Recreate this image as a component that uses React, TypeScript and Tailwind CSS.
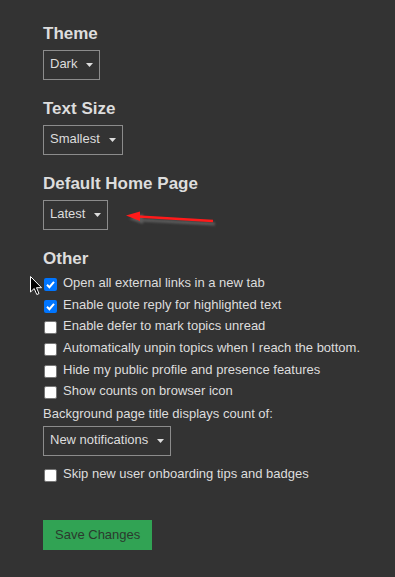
import React from "react";

const font = { fontFamily: '"Liberation Sans", Arial, sans-serif' };

function Caret() {
  return (
    <svg width="7" height="4" viewBox="0 0 7 4" className="shrink-0">
      <path d="M0 0 L7 0 L3.5 4 Z" fill="#dddddd" />
    </svg>
  );
}

function Select({ label }: { label: string }) {
  return (
    <div className="inline-flex h-[30px] items-center gap-[9px] border border-[#8c8c8c] pl-[6px] pr-[6px] pb-[2px] text-[13px] leading-[16px] text-[#dddddd]">
      <span>{label}</span>
      <span className="mt-[2px] flex">
        <Caret />
      </span>
    </div>
  );
}

function Box({ checked }: { checked?: boolean }) {
  if (checked) {
    return (
      <span className="mt-[4px] flex h-[13px] w-[13px] shrink-0 items-center justify-center rounded-[2px] bg-[#0075ff]">
        <svg width="13" height="13" viewBox="0 0 13 13">
          <path d="M3 6.8 L5.4 9.2 L10 3.8" fill="none" stroke="#ffffff" strokeWidth="2" />
        </svg>
      </span>
    );
  }
  return (
    <span className="mt-[4px] block h-[13px] w-[13px] shrink-0 rounded-[2px] border border-[#767676] bg-white" />
  );
}

function Row({ label, checked }: { label: string; checked?: boolean }) {
  return (
    <div className="flex h-[21.67px] items-start gap-[6px] pl-[1px]">
      <Box checked={checked} />
      <span className="pt-[1px] text-[13px] leading-[16px] text-[#dddddd]">{label}</span>
    </div>
  );
}

function Heading({ children }: { children: React.ReactNode }) {
  return (
    <h3 className="mb-[6px] text-[17px] font-bold leading-[20px] text-[#dddddd]">{children}</h3>
  );
}

export default function App() {
  return (
    <div className="relative min-h-screen w-full bg-[#333333] pl-[43px] pt-[24px]" style={font}>
      <Heading>Theme</Heading>
      <div className="mb-[19px]">
        <Select label="Dark" />
      </div>
      <Heading>Text Size</Heading>
      <div className="mb-[19px]">
        <Select label="Smallest" />
      </div>
      <Heading>Default Home Page</Heading>
      <div className="mb-[19px]">
        <Select label="Latest" />
      </div>
      <h3 className="mb-[5px] text-[17px] font-bold leading-[20px] text-[#dddddd]">Other</h3>
      <div className="flex flex-col">
        <Row label="Open all external links in a new tab" checked />
        <Row label="Enable quote reply for highlighted text" checked />
        <Row label="Enable defer to mark topics unread" />
        <Row label="Automatically unpin topics when I reach the bottom." />
        <Row label="Hide my public profile and presence features" />
        <Row label="Show counts on browser icon" />
      </div>
      <div className="mt-[2px] text-[13px] leading-[16px] text-[#dddddd]">
        Background page title displays count of:
      </div>
      <div className="mt-[4px]">
        <Select label="New notifications" />
      </div>
      <div className="mt-[9px]">
        <Row label="Skip new user onboarding tips and badges" />
      </div>
      <div className="mt-[33px]">
        <button className="h-[30px] bg-[#31a354] px-[12px] text-[13px] leading-[16px] text-[#2b3a2e]">
          Save Changes
        </button>
      </div>

      {/* red annotation arrow */}
      <svg
        className="pointer-events-none absolute left-[118px] top-[204px]"
        width="110"
        height="30"
        viewBox="0 0 110 30"
      >
        <defs>
          <filter id="blur" x="-10%" y="-50%" width="120%" height="200%">
            <feGaussianBlur stdDeviation="1.2" />
          </filter>
        </defs>
        <g filter="url(#blur)" opacity="0.6">
          <path d="M22 16 L97 20" stroke="#777777" strokeWidth="3" fill="none" />
          <path d="M11 15 L25 10 L25 20 Z" fill="#777777" />
        </g>
        <path d="M20 12.5 L95 17" stroke="#ff1a1a" strokeWidth="2.5" fill="none" />
        <path d="M8 11.5 L22 7.5 L22 17 Z" fill="#ff1a1a" />
      </svg>

      {/* mouse cursor */}
      <svg
        className="pointer-events-none absolute left-[30px] top-[276px]"
        width="12"
        height="20"
        viewBox="0 0 12 20"
      >
        <path
          d="M0.5 0.5 L0.5 16 L4.2 12.5 L6.8 18.5 L9 17.6 L6.5 11.7 L11.5 11.7 Z"
          fill="#000000"
          stroke="#ffffff"
          strokeWidth="1"
        />
      </svg>
    </div>
  );
}
